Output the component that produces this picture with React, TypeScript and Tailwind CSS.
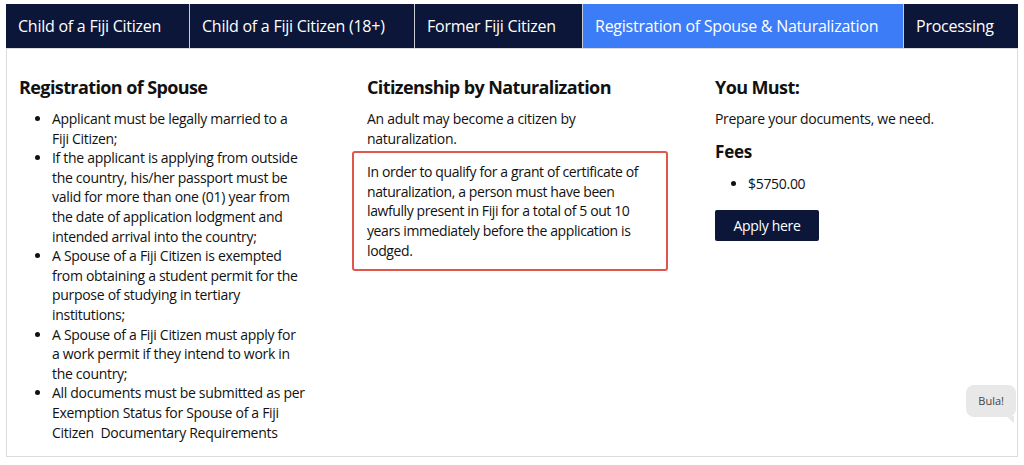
import React from 'react';

const tabs = [
  { label: 'Child of a Fiji Citizen', width: 'w-[184px]' },
  { label: 'Child of a Fiji Citizen (18+)', width: 'w-[225px]' },
  { label: 'Former Fiji Citizen', width: 'w-[168px]' },
  { label: 'Registration of Spouse & Naturalization', width: 'w-[321px]', active: true },
  { label: 'Processing', width: 'flex-1' },
];

// lines kept as in the source layout
const spouseRules = [
  ['Applicant must be legally married to a', 'Fiji Citizen;'],
  [
    'If the applicant is applying from outside',
    'the country, his/her passport must be',
    'valid for more than one (01) year from',
    'the date of application lodgment and',
    'intended arrival into the country;',
  ],
  ['A Spouse of a Fiji Citizen is exempted', 'from obtaining a student permit for the', 'purpose of studying in tertiary', 'institutions;'],
  ['A Spouse of a Fiji Citizen must apply for', 'a work permit if they intend to work in', 'the country;'],
  ['All documents must be submitted as per', 'Exemption Status for Spouse of a Fiji', 'Citizen\u00a0 Documentary Requirements'],
];

const naturalization = [
  'In order to qualify for a grant of certificate of',
  'naturalization, a person must have been',
  'lawfully present in Fiji for a total of 5 out 10',
  'years immediately before the application is',
  'lodged.',
];

function Lines({ lines }: { lines: string[] }) {
  return (
    <>
      {lines.map((line) => (
        <span key={line} className="block whitespace-nowrap">
          {line}
        </span>
      ))}
    </>
  );
}

export default function App() {
  return (
    <div className="relative h-[465px] bg-white px-[6px] pt-[4px] font-['Open_Sans',sans-serif] text-[#111]">
      <nav className="flex h-[44px] bg-[#0b1638]">
        {tabs.map((tab) => (
          <div
            key={tab.label}
            className={`${tab.width} flex items-center border-r border-[#c8ccd6] pl-[12px] text-[16px] tracking-[-0.25px] text-white last:border-r-0 ${tab.active ? 'bg-[#3d7cf7]' : ''}`}
          >
            {tab.label}
          </div>
        ))}
      </nav>

      <section className="grid h-[409px] grid-cols-[348px_348px_1fr] border border-[#dcdcdc] pl-[12px] pt-[25px] text-[14px] leading-[19.6px] tracking-[-0.3px]">
        <div>
          <h2 className="mb-[8px] text-[18px] font-bold leading-[27px] tracking-[-0.6px]">Registration of Spouse</h2>
          <ul className="list-disc pl-[33px]">
            {spouseRules.map((rule) => (
              <li key={rule[0]}>
                <Lines lines={rule} />
              </li>
            ))}
          </ul>
        </div>

        <div>
          <h2 className="mb-[8px] text-[18px] font-bold leading-[27px] tracking-[-0.6px]">Citizenship by Naturalization</h2>
          <p>
            <Lines lines={['An adult may become a citizen by', 'naturalization.']} />
          </p>
          <p className="-ml-[15px] mt-[3px] w-[316px] rounded-[3px] border-2 border-[#e0564c] px-[13px] py-[9px] tracking-[-0.4px]">
            <Lines lines={naturalization} />
          </p>
        </div>

        <div>
          <h2 className="mb-[8px] text-[18px] font-bold leading-[27px] tracking-[-0.6px]">You Must:</h2>
          <p>Prepare your documents, we need.</p>
          <h3 className="mt-[11px] text-[17px] font-bold leading-[24px] tracking-[-0.2px]">Fees</h3>
          <ul className="mt-[10px] list-disc pl-[33px]">
            <li>$5750.00</li>
          </ul>
          <button className="mt-[17px] h-[31px] w-[104px] rounded-[2px] bg-[#0b1638] text-[14px] text-white">Apply here</button>
        </div>
      </section>

      <div className="absolute right-[8px] top-[385px]">
        <div className="rounded-[8px] bg-[#e8e8e8] px-[12px] py-[8px] text-[11px] leading-[16px] text-[#444]">Bula!</div>
        <div className="absolute -bottom-[6px] right-[2px] h-0 w-0 border-l-[8px] border-t-[7px] border-l-transparent border-t-[#e8e8e8]" />
      </div>
    </div>
  );
}
